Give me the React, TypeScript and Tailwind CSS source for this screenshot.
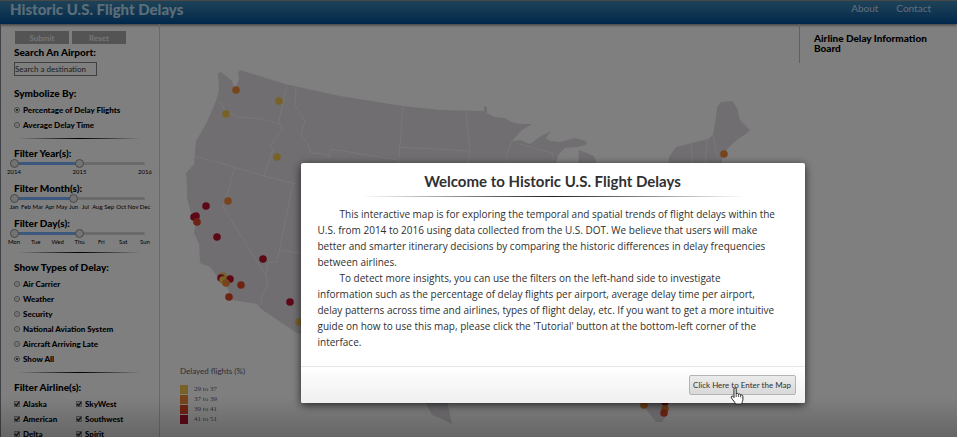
import { useState } from "react";

const YELLOW = "#f0c450";
const ORANGE = "#ee8836";
const VERMILION = "#dc4626";
const RED = "#b8102e";

const airports: { x: number; y: number; color: string }[] = [
  { x: 236, y: 90, color: ORANGE },
  { x: 279, y: 101, color: YELLOW },
  { x: 226, y: 114, color: YELLOW },
  { x: 277, y: 157, color: YELLOW },
  { x: 228, y: 201, color: ORANGE },
  { x: 206, y: 206, color: RED },
  { x: 196, y: 216, color: RED },
  { x: 194, y: 217, color: RED },
  { x: 197, y: 222, color: VERMILION },
  { x: 217, y: 237, color: RED },
  { x: 263, y: 259, color: RED },
  { x: 223, y: 276, color: YELLOW },
  { x: 221, y: 278, color: RED },
  { x: 230, y: 279, color: RED },
  { x: 223, y: 280, color: YELLOW },
  { x: 226, y: 283, color: ORANGE },
  { x: 241, y: 285, color: VERMILION },
  { x: 229, y: 297, color: VERMILION },
  { x: 290, y: 302, color: RED },
  { x: 299, y: 322, color: YELLOW },
  { x: 724, y: 154, color: ORANGE },
  { x: 644, y: 405, color: ORANGE },
  { x: 665, y: 402, color: RED },
  { x: 665, y: 409, color: ORANGE },
  { x: 664, y: 413, color: VERMILION },
];

const borders = [
  "M217 101 L222 104 L225 112 L240 117 L262 119 L280 124",
  "M287 85 L279 121 L282 129 L270 146 L273 150 L264 176",
  "M195 156 L234 167 L264 176 L296 184",
  "M296 87 L295 105 L305 121 L301 134 L308 145 L311 153 L326 154 L329 158 L331 149 L398 160",
  "M403 107 L398 170",
  "M398 147 L469 151",
  "M466 111 L470 151 L467 170",
  "M235 168 L223 207 L266 276 L268 285 L262 294 L261 305",
  "M293 184 L277 262 L268 262 L266 275",
  "M279 250 L305 254",
  "M512 141 L506 156 L512 166",
  "M520 144 L537 149 L552 153 L554 160",
  "M691 144 L693 164",
  "M707 140 L705 164",
  "M713 136 L718 160",
];

const legend = [
  { label: "29 to 37", swatch: "bg-[#f0c450]" },
  { label: "37 to 39", swatch: "bg-[#ee8836]" },
  { label: "39 to 41", swatch: "bg-[#dc4626]" },
  { label: "41 to 51", swatch: "bg-[#b8102e]" },
];

const symbols = ["Percentage of Delay Flights", "Average Delay Time"];
const delayTypes = ["Air Carrier", "Weather", "Security", "National Aviation System", "Aircraft Arriving Late", "Show All"];
const airlines = ["Alaska", "SkyWest", "American", "Southwest", "Delta", "Spirit"];
const months = ["Jan", "Feb", "Mar", "Apr", "May", "Jun", "Jul", "Aug", "Sep", "Oct", "Nov", "Dec"];
const days = ["Mon", "Tue", "Wed", "Thu", "Fri", "Sat", "Sun"];
const years = ["2014", "2015", "2016"];

function Heading({ children }: { children: string }) {
  return <h2 className="pl-1 text-[10px] leading-3 font-black">{children}</h2>;
}

function Divider() {
  return <div className="mx-2 h-px bg-linear-to-r from-transparent via-black to-transparent" />;
}

function RadioGroup({ name, options, initial }: { name: string; options: string[]; initial: string }) {
  const [value, setValue] = useState(initial);
  return (
    <div className="pl-1">
      {options.map((option) => (
        <label key={option} className="flex h-[15px] items-center gap-[3px] text-[8px] leading-3 font-black whitespace-nowrap">
          <input
            type="radio"
            name={name}
            checked={value === option}
            onChange={() => setValue(option)}
            className="size-1.5 shrink-0 appearance-none rounded-full border border-[#909090] bg-[#d8d8d8] bg-clip-content p-px checked:bg-[#202020]"
          />
          {option}
        </label>
      ))}
    </div>
  );
}

const rangeClass =
  "pointer-events-none absolute inset-0 h-[9px] w-full appearance-none bg-transparent [&::-webkit-slider-thumb]:pointer-events-auto [&::-webkit-slider-thumb]:size-[9px] [&::-webkit-slider-thumb]:appearance-none [&::-webkit-slider-thumb]:rounded-full [&::-webkit-slider-thumb]:border [&::-webkit-slider-thumb]:border-[#909090] [&::-webkit-slider-thumb]:bg-[#e6e6e6]";

function RangeFilter({ title, labels, end }: { title: string; labels: string[]; end: number }) {
  const [low, setLow] = useState(0);
  const [high, setHigh] = useState(end);
  const max = labels.length - 1;
  return (
    <section>
      <Heading>{title}</Heading>
      <div className="relative h-[9px]">
        <div className="flex h-full items-center px-1">
          <div className="h-[3px] w-full rounded-sm bg-[#d4d4d4]">
            <div
              className="h-full bg-[#78b0f8]"
              style={{ marginLeft: `${(low / max) * 100}%`, width: `${((high - low) / max) * 100}%` }}
            />
          </div>
        </div>
        <input type="range" aria-label={`${title} from`} min={0} max={max} value={low} onChange={(e) => setLow(Math.min(+e.target.value, high))} className={rangeClass} />
        <input type="range" aria-label={`${title} to`} min={0} max={max} value={high} onChange={(e) => setHigh(Math.max(+e.target.value, low))} className={rangeClass} />
      </div>
      <div className="flex justify-between px-1 text-[6px] leading-[7px]">
        {labels.map((label) => (
          <span key={label} className="flex w-0 justify-center">
            {label}
          </span>
        ))}
      </div>
    </section>
  );
}

function Sidebar() {
  return (
    <aside className="w-[159px] shrink-0 overflow-hidden border-r border-[#d0d0d0] pr-[10px] pl-[9px]">
      <div className="flex gap-[3px] pt-[7px] pl-[5px]">
        <button className="h-[13px] w-[54px] bg-[#a8a8a8] text-[8px] leading-3 font-bold text-[#e8e8e8]">Submit</button>
        <button className="h-[13px] w-[54px] bg-[#a8a8a8] text-[8px] leading-3 font-bold text-[#e8e8e8]">Reset</button>
      </div>
      <div className="pt-[2px]">
        <label htmlFor="airport" className="block pl-1 text-[10px] leading-3 font-black">
          Search An Airport:
        </label>
        <input
          id="airport"
          placeholder="Search a destination"
          className="mt-1 ml-1 block h-[14px] w-[83px] border border-[#808080] text-[8px] leading-3 placeholder:text-[#404040]"
        />
      </div>
      <div className="pt-[11px] pb-[6px]">
        <Heading>Symbolize By:</Heading>
        <div className="pt-[3px]">
          <RadioGroup name="symbol" options={symbols} initial="Percentage of Delay Flights" />
        </div>
      </div>
      <Divider />
      <div className="flex flex-col gap-[7px] pt-2 pb-[7px]">
        <RangeFilter title="Filter Year(s):" labels={years} end={1} />
        <RangeFilter title="Filter Month(s):" labels={months} end={5} />
        <RangeFilter title="Filter Day(s):" labels={days} end={3} />
      </div>
      <Divider />
      <div className="pt-2 pb-[6px]">
        <Heading>Show Types of Delay:</Heading>
        <div className="pt-[3px]">
          <RadioGroup name="delay" options={delayTypes} initial="Show All" />
        </div>
      </div>
      <Divider />
      <div className="pt-2">
        <Heading>Filter Airline(s):</Heading>
        <div className="grid grid-cols-[62px_1fr] pt-[3px] pl-1">
          {airlines.map((airline) => (
            <label key={airline} className="flex h-[15px] items-center gap-[3px] text-[8px] leading-3 font-black">
              <span className="relative size-1.5 shrink-0">
                <input type="checkbox" defaultChecked className="peer block size-1.5 appearance-none border border-[#a0a0a0] bg-[#d8d8d8]" />
                <svg viewBox="0 0 6 6" className="pointer-events-none absolute inset-0 hidden size-1.5 peer-checked:block" aria-hidden="true">
                  <path d="M0.9 3 L2.5 4.6 L5.2 1.1" fill="none" stroke="#202020" strokeWidth="1.3" />
                </svg>
              </span>
              {airline}
            </label>
          ))}
        </div>
      </div>
    </aside>
  );
}

function DelayMap() {
  return (
    <main className="relative min-w-0 flex-1">
      <svg viewBox="160 24 639 412" preserveAspectRatio="xMinYMin meet" className="block w-full" role="img" aria-label="Map of flight delays">
        <g fill="#e0dce2">
          <path d="M218 73 L221 72 L232 81 L234 87 L237 85 L239 78 L238 73 L240 70 L285 84 L340 96 L403 106 L440 110 L484 111 L484 106 L487 107 L487 113 L494 117 L505 118 L511 122 L520 124 L532 124 L522 130 L512 141 L520 140 L530 144 L541 136 L551 131 L546 138 L550 141 L560 142 L575 138 L586 141 L587 144 L578 147 L565 148 L558 155 L556 163 L556 200 L640 200 L668 170 L669 157 L676 147 L708 139 L713 135 L716 117 L717 107 L721 102 L732 101 L737 108 L740 120 L750 130 L746 134 L738 139 L728 148 L722 158 L722 170 L700 300 L655 370 L668 405 L667 415 L662 422 L656 422 L650 414 L645 408 L636 400 L630 380 L560 380 L447 400 L452 424 L444 420 L432 415 L424 400 L350 345 L297 333 L261 309 L257 304 L232 300 L228 289 L217 276 L210 267 L200 263 L199 244 L194 233 L196 222 L191 213 L187 198 L187 186 L186 173 L194 164 L196 141 L207 122 L216 101 L219 90 Z" />
          <path d="M578 170 L579 150 L584 152 L594 156 L597 164 L597 170 Z" />
        </g>
        <g fill="none" stroke="#f2f4f0" strokeWidth="0.8">
          {borders.map((d) => (
            <path key={d} d={d} />
          ))}
        </g>
        {airports.map((a) => (
          <circle key={`${a.x}-${a.y}`} cx={a.x} cy={a.y} r="3.8" fill={a.color} />
        ))}
      </svg>
      <div className="absolute top-[341px] left-5 text-[#606070]">
        <p className="text-[8px] leading-3">Delayed flights (%)</p>
        <ul className="pt-[7px]">
          {legend.map((row) => (
            <li key={row.label} className="flex h-[10px] items-center gap-[6px] font-['Liberation_Serif',serif] text-[7px] leading-[10px]">
              <span className={`h-[9px] w-2 ${row.swatch}`} />
              {row.label}
            </li>
          ))}
        </ul>
      </div>
    </main>
  );
}

function WelcomeDialog() {
  return (
    <div className="absolute inset-0 flex items-start justify-center bg-black/50 pt-[163px] pl-[148px]">
      <div className="pointer-events-none absolute inset-x-0 bottom-0 h-10 bg-linear-to-b from-transparent to-black/20" />
      <section role="dialog" aria-labelledby="welcome" className="relative w-[504px] rounded-xs bg-white shadow-[0_2px_8px_rgba(0,0,0,0.7)]">
        <h2 id="welcome" className="pt-2 text-center text-[15px] leading-5 font-bold text-[#303030]">
          Welcome to Historic U.S. Flight Delays
        </h2>
        <div className="mx-[60px] mt-[5px] h-px bg-linear-to-r from-transparent via-[#202020] to-transparent" />
        <div className="px-[17px] pt-[9px] pb-4 font-['Open_Sans','Noto_Sans',sans-serif] text-[10px] leading-4 whitespace-nowrap text-[#303030]">
          <p className="indent-[22px]">
            This interactive map is for exploring the temporal and spatial trends of flight delays within the
            <br />
            U.S. from 2014 to 2016 using data collected from the U.S. DOT. We believe that users will make
            <br />
            better and smarter itinerary decisions by comparing the historic differences in delay frequencies
            <br />
            between airlines.
          </p>
          <p className="indent-[22px]">
            To detect more insights, you can use the filters on the left-hand side to investigate
            <br />
            information such as the percentage of delay flights per airport, average delay time per airport,
            <br />
            delay patterns across time and airlines, types of flight delay, etc. If you want to get a more intuitive
            <br />
            guide on how to use this map, please click the 'Tutorial' button at the bottom-left corner of the
            <br />
            interface.
          </p>
        </div>
        <footer className="flex justify-end rounded-b-xs border-t border-[#e5e5e5] bg-linear-to-b from-white to-[#efefef] px-[9px] pt-2 pb-2">
          <button className="relative h-5 w-[107px] rounded-xs border border-[#b4b4b4] bg-linear-to-b from-[#ececec] to-[#d8d8d8] text-[8px] leading-3 whitespace-nowrap text-[#303030]">
            Click Here to Enter the Map
            <svg viewBox="0 0 14 18" className="absolute top-[11px] left-[40px] h-[18px] w-[14px]" aria-hidden="true">
              <path
                d="M4 1.8 C4 0.4 6.2 0.4 6.2 1.8 V7 C6.6 6 8.4 6.2 8.4 7.4 C9 6.6 10.6 7 10.6 8.2 C11.4 7.6 12.9 8 12.9 9.4 V12.5 C12.9 14 12 14.8 11.8 17 H5.4 C5 15 3 13.4 1.4 10.8 C0.6 9.4 2.2 8.4 3.2 9.6 L4 10.6 Z"
                fill="#fff"
                stroke="#222"
                strokeWidth="1"
                strokeLinejoin="round"
              />
              <path d="M6.2 7 V10 M8.4 7.4 V10 M10.6 8.2 V10.4" stroke="#222" strokeWidth="0.8" />
            </svg>
          </button>
        </footer>
      </section>
    </div>
  );
}

export default function App() {
  return (
    <div className="relative flex h-screen flex-col overflow-hidden border-r border-b border-white bg-white font-['Lato','Noto_Sans',sans-serif] text-black">
      <header className="flex h-6 shrink-0 items-start justify-between border-t border-[#909090] bg-linear-to-b from-[#3c86b0] to-[#005098] pr-[26px] pl-[10px] shadow-[0_1px_3px_rgba(0,0,0,0.6)]">
        <h1 className="text-[15px] leading-4 font-black text-[#b8dcf0]">Historic U.S. Flight Delays</h1>
        <nav className="flex gap-[18px] text-[10px] leading-[14px] text-[#c8dcec]">
          <a href="#about">About</a>
          <a href="#contact">Contact</a>
        </nav>
      </header>
      <div className="flex min-h-0 flex-1 border-l border-[#808890]">
        <Sidebar />
        <DelayMap />
        <aside className="h-[39px] w-[158px] shrink-0 border-l border-[#c0c0c0] pt-[9px] pr-4 pl-[14px]">
          <h2 className="text-[10px] leading-[10px] font-black">Airline Delay Information Board</h2>
        </aside>
      </div>
      <WelcomeDialog />
    </div>
  );
}
